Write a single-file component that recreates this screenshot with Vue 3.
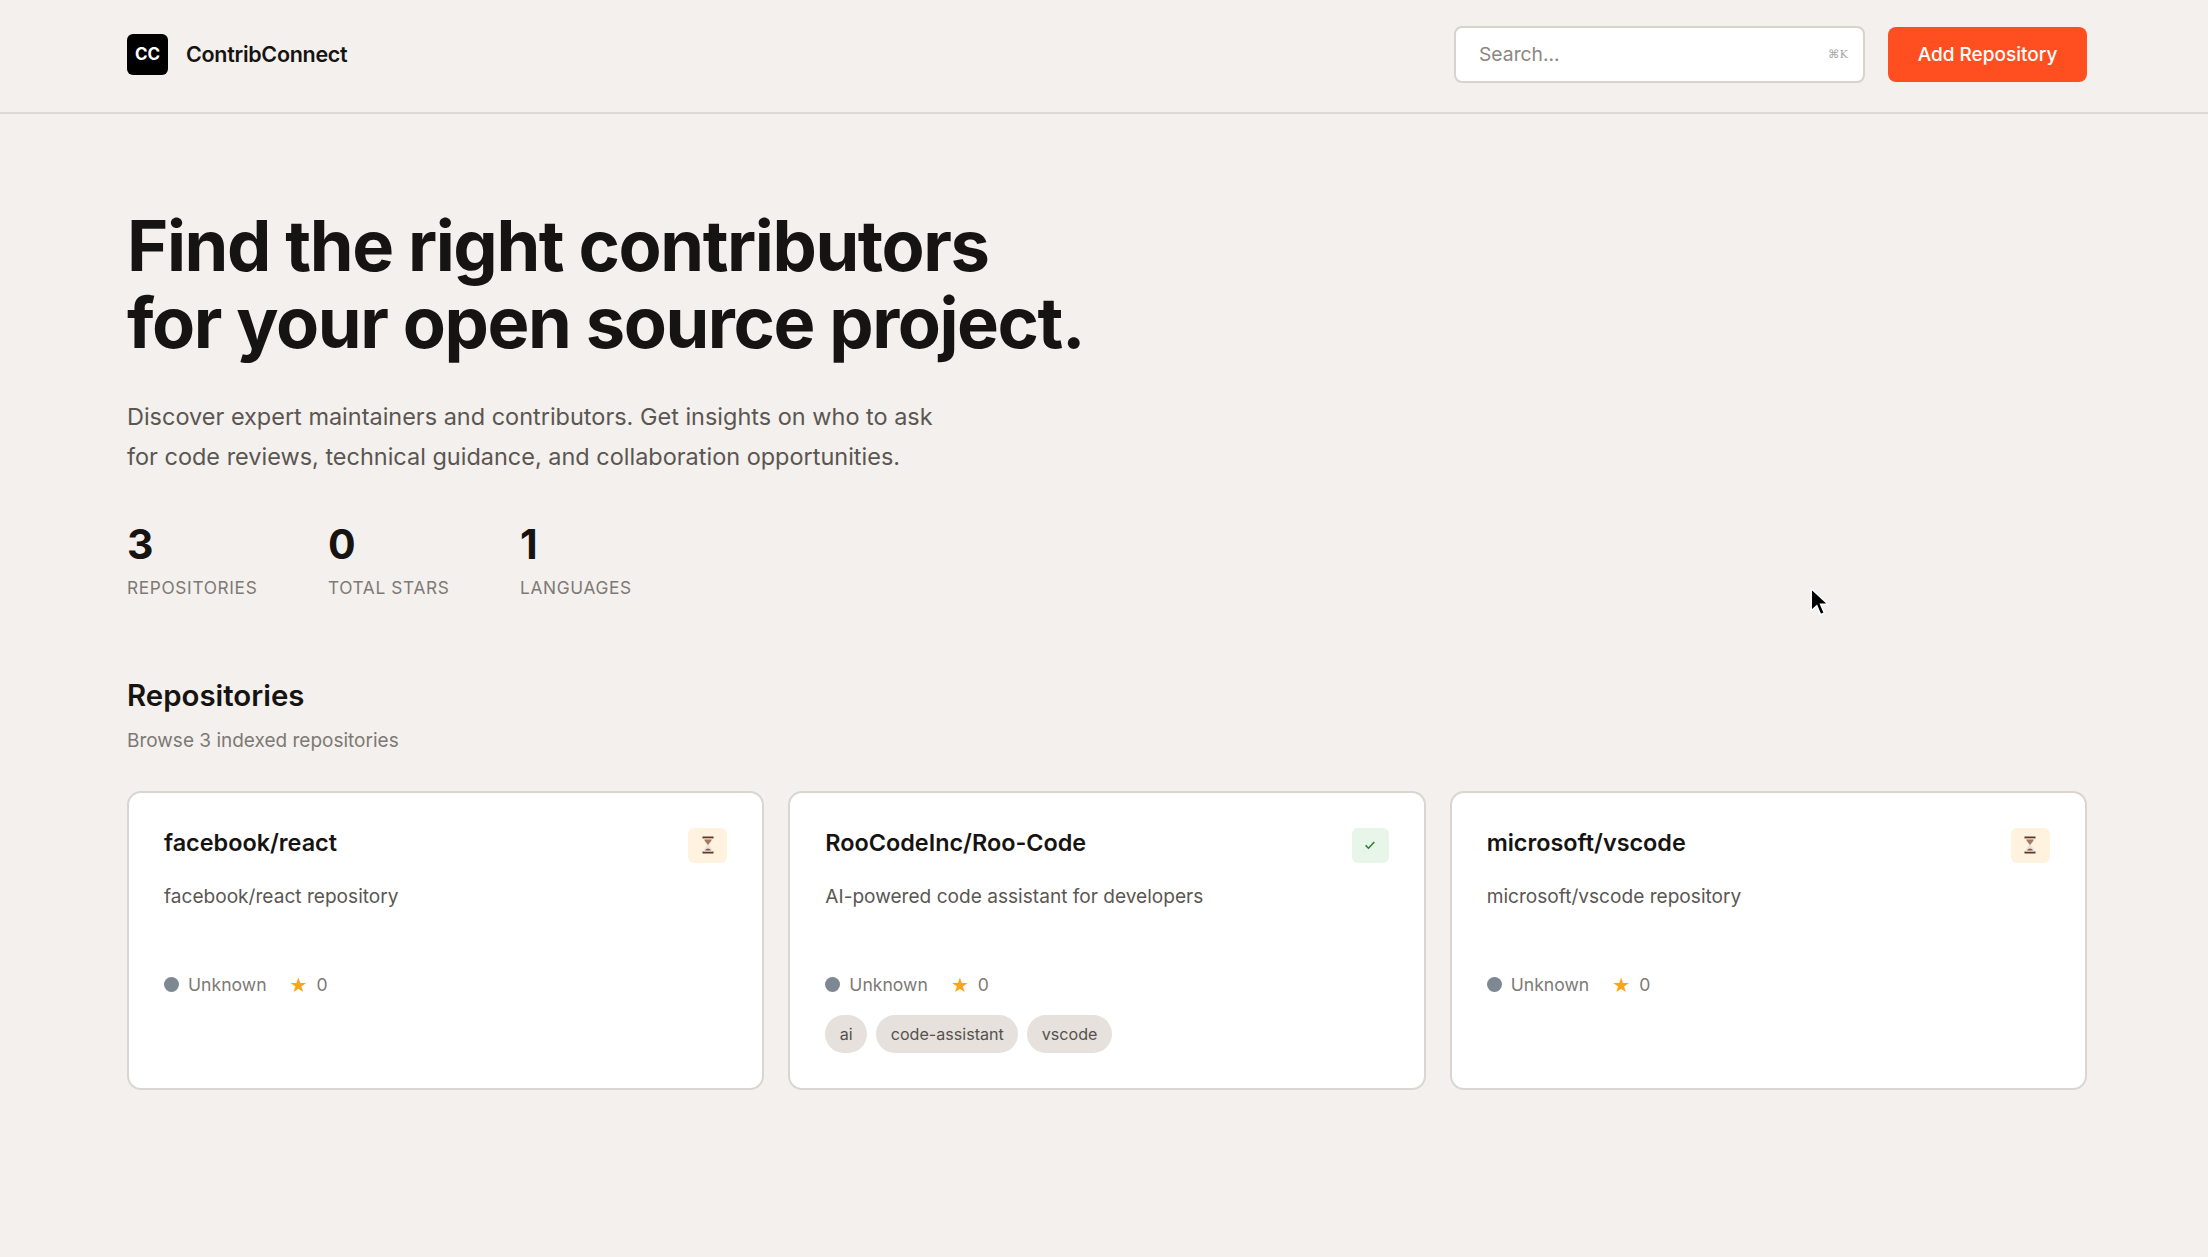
<template>
  <div class="page">
    <header class="topbar">
      <div class="brand">
        <div class="logo">CC</div>
        <span class="brand-name">ContribConnect</span>
      </div>
      <div class="actions">
        <div class="search">
          <span class="search-text">Search...</span>
          <span class="kbd">⌘K</span>
        </div>
        <button class="add-btn">Add Repository</button>
      </div>
    </header>

    <main class="content">
      <section class="hero">
        <h1>Find the right contributors<br />for your open source project.</h1>
        <p class="lead">
          Discover expert maintainers and contributors. Get insights on who to ask<br />
          for code reviews, technical guidance, and collaboration opportunities.
        </p>
        <div class="stats">
          <div v-for="s in stats" :key="s.label" class="stat">
            <div class="stat-value">{{ s.value }}</div>
            <div class="stat-label">{{ s.label }}</div>
          </div>
        </div>
      </section>

      <section class="repos">
        <h2>Repositories</h2>
        <p class="sub">Browse 3 indexed repositories</p>
        <div class="grid">
          <article v-for="r in repos" :key="r.name" class="card">
            <div class="card-head">
              <h3>{{ r.name }}</h3>
              <span class="status" :class="r.done ? 'done' : 'pending'">
                <svg v-if="r.done" width="14" height="14" viewBox="0 0 14 14" fill="none">
                  <path d="M2.6 7.4 5.5 10.2 11.3 3.9" stroke="#2e7d32" stroke-width="1.5" />
                </svg>
                <svg v-else width="12" height="18" viewBox="0 0 12 18">
                  <rect x="0.5" y="0.5" width="11" height="2" fill="#5d3a28" />
                  <rect x="0.5" y="15.5" width="11" height="2" fill="#5d3a28" />
                  <path d="M1.6 2.5h8.8c0 3-2.6 4.7-3.6 6.5 1 1.8 3.6 3.5 3.6 6.5H1.6c0-3 2.6-4.7 3.6-6.5-1-1.8-3.6-3.5-3.6-6.5z" fill="#e6e3e2" />
                  <path d="M2.4 3.4h7.2c-.2 2-2.6 3.6-3.6 5.6-1-2-3.4-3.6-3.6-5.6z" fill="#a9775a" />
                  <path d="M3.1 14.6c.4-1.4 1.9-2.2 2.9-2.2s2.5.8 2.9 2.2z" fill="#8d5a40" />
                </svg>
              </span>
            </div>
            <p class="desc">{{ r.desc }}</p>
            <div class="meta">
              <span class="lang"><i class="dot"></i>Unknown</span>
              <span class="stars"><span class="star">★</span>0</span>
            </div>
            <div v-if="r.tags.length" class="tags">
              <span v-for="t in r.tags" :key="t" class="tag">{{ t }}</span>
            </div>
          </article>
        </div>
      </section>
    </main>

    <svg class="cursor" width="20" height="31" viewBox="0 0 18 28">
      <path d="M2 1.5v20l5-4.6 3.4 8 3.4-1.5-3.4-7.8h6.8z" fill="#000" stroke="#fff" stroke-width="1.3" />
    </svg>
  </div>
</template>

<script setup>
const stats = [
  { value: '3', label: 'REPOSITORIES' },
  { value: '0', label: 'TOTAL STARS' },
  { value: '1', label: 'LANGUAGES' }
]

const repos = [
  { name: 'facebook/react', desc: 'facebook/react repository', done: false, tags: [] },
  {
    name: 'RooCodeInc/Roo-Code',
    desc: 'AI-powered code assistant for developers',
    done: true,
    tags: ['ai', 'code-assistant', 'vscode']
  },
  { name: 'microsoft/vscode', desc: 'microsoft/vscode repository', done: false, tags: [] }
]
</script>

<style>
html,
body {
  margin: 0;
  background: #f4f0ed;
}
</style>

<style scoped>
.page {
  position: relative;
  min-height: 1257px;
  background: #f4f0ed;
  color: #161412;
  font-family: Inter, "Liberation Sans", sans-serif;
  overflow: hidden;
}

.topbar {
  height: 114px;
  box-sizing: border-box;
  padding: 0 121px 4px 127px;
  display: flex;
  align-items: center;
  justify-content: space-between;
  border-bottom: 2px solid #ded9d3;
}

.brand {
  display: flex;
  align-items: center;
  gap: 18px;
}

.logo {
  width: 41px;
  height: 41px;
  border-radius: 6px;
  background: #000;
  color: #fff;
  display: flex;
  align-items: center;
  justify-content: center;
  font-size: 17px;
  font-weight: 700;
}

.brand-name {
  font-size: 21.5px;
  font-weight: 600;
  letter-spacing: -0.3px;
}

.actions {
  display: flex;
  align-items: center;
  gap: 23px;
}

.search {
  width: 411px;
  height: 57px;
  box-sizing: border-box;
  padding: 0 15px 0 23px;
  background: #fff;
  border: 2px solid #d9d3cd;
  border-radius: 8px;
  display: flex;
  align-items: center;
  justify-content: space-between;
}

.search-text {
  font-size: 19.3px;
  color: #8a8682;
}

.kbd {
  font-family: "DejaVu Serif", serif;
  font-size: 11.5px;
  color: #aaa6a2;
}

.add-btn {
  width: 199px;
  height: 55px;
  border: none;
  border-radius: 8px;
  background: #ff4f20;
  color: #fff;
  font-family: inherit;
  font-size: 19px;
  font-weight: 500;
}

.content {
  padding: 93px 121px 0 127px;
}

h1 {
  margin: 0;
  font-size: 70.4px;
  line-height: 77.4px;
  font-weight: 700;
  letter-spacing: -1.41px;
}

.lead {
  margin: 35px 0 0;
  font-size: 23.47px;
  line-height: 40px;
  color: #5a5652;
}

.stats {
  display: flex;
  gap: 70.5px;
  margin-top: 40px;
}

.stat-value {
  font-size: 41px;
  line-height: 54px;
  font-weight: 700;
}

.stat-label {
  margin-top: 3px;
  font-size: 17.3px;
  line-height: 28px;
  letter-spacing: 0.65px;
  color: #7d7975;
}

.repos {
  margin-top: 74px;
}

h2 {
  margin: 0;
  font-size: 29.4px;
  line-height: 40px;
  font-weight: 600;
}

.sub {
  margin: 9px 0 0;
  font-size: 19px;
  line-height: 32px;
  color: #7d7975;
}

.grid {
  display: grid;
  grid-template-columns: repeat(3, 1fr);
  gap: 24px;
  margin-top: 34px;
}

.card {
  height: 299px;
  box-sizing: border-box;
  padding: 34px 35px;
  background: #fff;
  border: 2px solid #dad5cf;
  border-radius: 14px;
}

.card-head {
  display: flex;
  justify-content: space-between;
  align-items: flex-start;
}

h3 {
  margin: 0;
  font-size: 23.4px;
  line-height: 32px;
  font-weight: 600;
}

.status {
  height: 35px;
  margin-top: 1px;
  border-radius: 6px;
  display: flex;
  align-items: center;
  justify-content: center;
}

.status.pending {
  width: 39px;
  background: #fff3e0;
}

.status.done {
  width: 37px;
  background: #e8f5e9;
}

.desc {
  margin: 17px 0 0;
  font-size: 19.1px;
  line-height: 32px;
  color: #5a5652;
}

.meta {
  display: flex;
  align-items: center;
  gap: 23px;
  margin-top: 59px;
  font-size: 17.6px;
  line-height: 28px;
  color: #7d7975;
}

.lang,
.stars {
  display: flex;
  align-items: center;
}

.dot {
  width: 15px;
  height: 15px;
  margin-right: 9px;
  border-radius: 50%;
  background: #7d8893;
}

.star {
  margin-right: 9px;
  color: #f9a514;
  font-family: "DejaVu Sans", sans-serif;
  font-size: 20px;
}

.tags {
  display: flex;
  gap: 9px;
  margin-top: 16px;
}

.tag {
  padding: 0 14.5px;
  height: 38px;
  line-height: 38px;
  border-radius: 19px;
  background: #e6e1dc;
  color: #55514d;
  font-size: 16.1px;
}

.cursor {
  position: absolute;
  left: 1809px;
  top: 587px;
}
</style>
